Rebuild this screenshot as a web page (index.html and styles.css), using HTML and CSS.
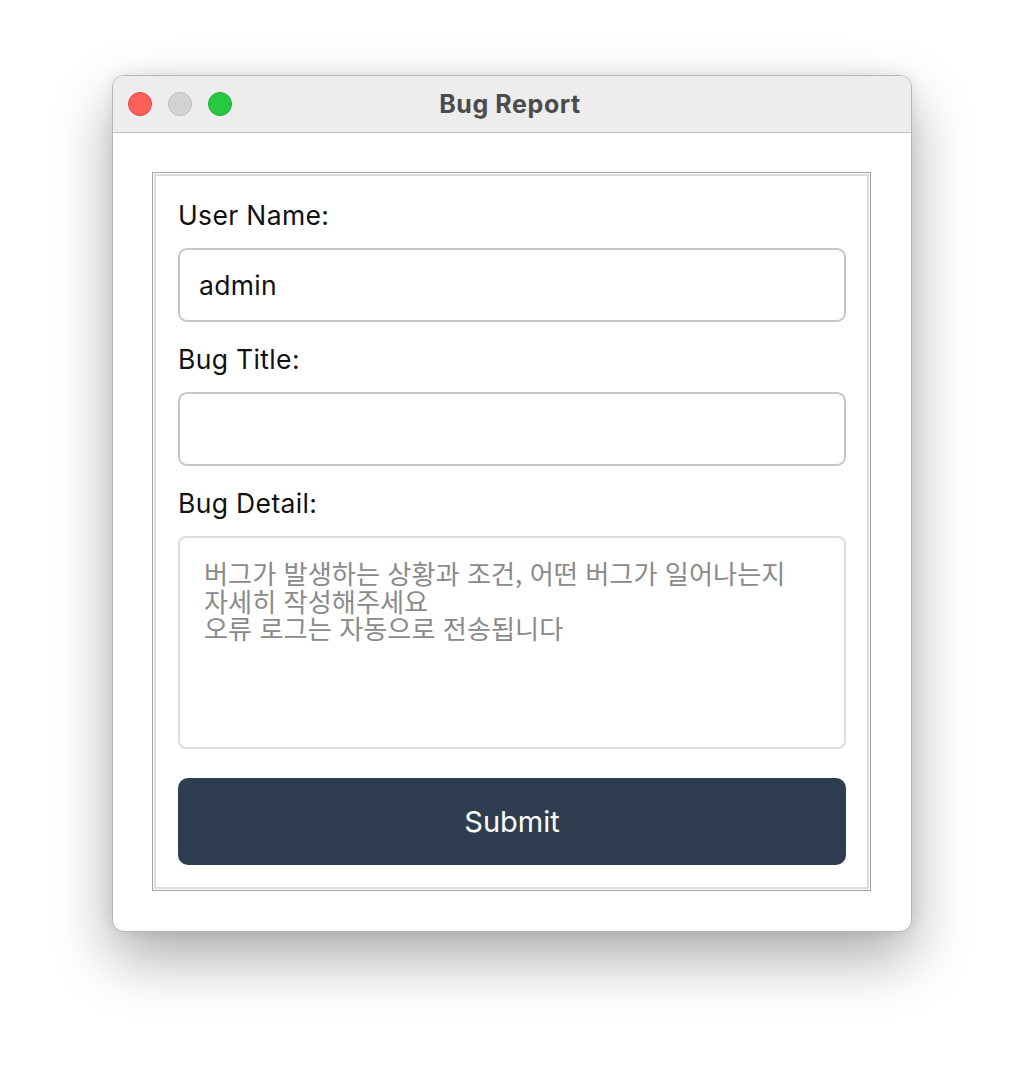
FILE: index.html
```html
<!DOCTYPE html>
<html lang="ko">
<head>
<meta charset="utf-8">
<title>Bug Report</title>
<link rel="stylesheet" href="styles.css">
</head>
<body>
<div class="window">
  <div class="titlebar">
    <div class="lights">
      <span class="light red"></span>
      <span class="light gray"></span>
      <span class="light green"></span>
    </div>
    <div class="title">Bug Report</div>
  </div>
  <div class="content">
    <form class="frame">
      <label class="label">User Name:</label>
      <input class="field" type="text" value="admin">
      <label class="label">Bug Title:</label>
      <input class="field" type="text" value="">
      <label class="label">Bug Detail:</label>
      <textarea class="detail" placeholder="버그가 발생하는 상황과 조건, 어떤 버그가 일어나는지&#10;자세히 작성해주세요&#10;오류 로그는 자동으로 전송됩니다"></textarea>
      <button class="submit" type="button">Submit</button>
    </form>
  </div>
</div>
</body>
</html>
```
FILE: styles.css
```css
html, body {
  margin: 0;
  padding: 0;
  background: #ffffff;
}
body {
  min-height: 1080px;
  font-family: "Inter", "Noto Sans CJK KR", sans-serif;
}
.window {
  box-sizing: border-box;
  width: 800px;
  height: 857px;
  margin: 75px 0 0 112px;
  border: 1px solid #b4b4b4;
  border-radius: 12px;
  background: #ffffff;
  box-shadow: 0 26px 60px rgba(0, 0, 0, 0.33), 0 0 14px rgba(0, 0, 0, 0.08);
  overflow: hidden;
  display: flex;
  flex-direction: column;
}
.titlebar {
  position: relative;
  height: 56px;
  background: #ecedec;
  border-bottom: 1px solid #c6c6c6;
  display: flex;
  align-items: center;
  justify-content: center;
}
.lights {
  position: absolute;
  left: 15px;
  top: 16px;
  display: flex;
  gap: 16px;
}
.light {
  box-sizing: border-box;
  width: 24px;
  height: 24px;
  border-radius: 50%;
  border: 1px solid transparent;
}
.light.red { background: #fe5f57; border-color: #e2463f; }
.light.gray { background: #d3d3d3; border-color: #bdbdbd; }
.light.green { background: #28c840; border-color: #1eab31; }
.title {
  font-family: "Inter", sans-serif;
  font-weight: 700;
  font-size: 25px;
  letter-spacing: 0.6px;
  color: #4b4b4b;
  margin-left: -4px;
}
.content {
  flex: 1;
  padding: 39px 40px 40px 39px;
}
.frame {
  box-sizing: border-box;
  width: 719px;
  height: 719px;
  margin: 0;
  border: 1px solid #a3a3a3;
  box-shadow: inset 0 0 0 1px #ffffff, inset 0 0 0 3px #dcdcdc;
  padding: 26px 24px 24px 25px;
  display: flex;
  flex-direction: column;
}
.label {
  flex: none;
  font-family: "Inter", sans-serif;
  font-size: 26.5px;
  letter-spacing: 0.35px;
  line-height: 32px;
  height: 32px;
  color: #111111;
  margin-bottom: 17px;
}
.field {
  flex: none;
  box-sizing: border-box;
  width: 668px;
  height: 74px;
  margin: 0 0 21px 0;
  padding: 0 19px;
  border: 2px solid #c3c6ca;
  border-radius: 9px;
  background: #ffffff;
  font-family: "Inter", sans-serif;
  font-size: 26.5px;
  letter-spacing: 0.3px;
  color: #111111;
  outline: none;
}
.detail {
  flex: none;
  box-sizing: border-box;
  width: 668px;
  height: 213px;
  margin: 0;
  padding: 22px 22px 21px 24px;
  border: 2px solid #dcdcdc;
  border-radius: 8px;
  background: #ffffff;
  font-family: "Noto Sans CJK KR", "Inter", sans-serif;
  font-size: 26.2px;
  line-height: 27.5px;
  color: #111111;
  resize: none;
  outline: none;
}
.detail::placeholder {
  color: #8a8a8a;
  opacity: 1;
}
.submit {
  flex: none;
  box-sizing: border-box;
  width: 668px;
  height: 87px;
  margin-top: 29px;
  border: none;
  border-radius: 10px;
  background: #2e3e50;
  color: #ffffff;
  font-family: "Inter", sans-serif;
  font-size: 29px;
  cursor: pointer;
}
```
